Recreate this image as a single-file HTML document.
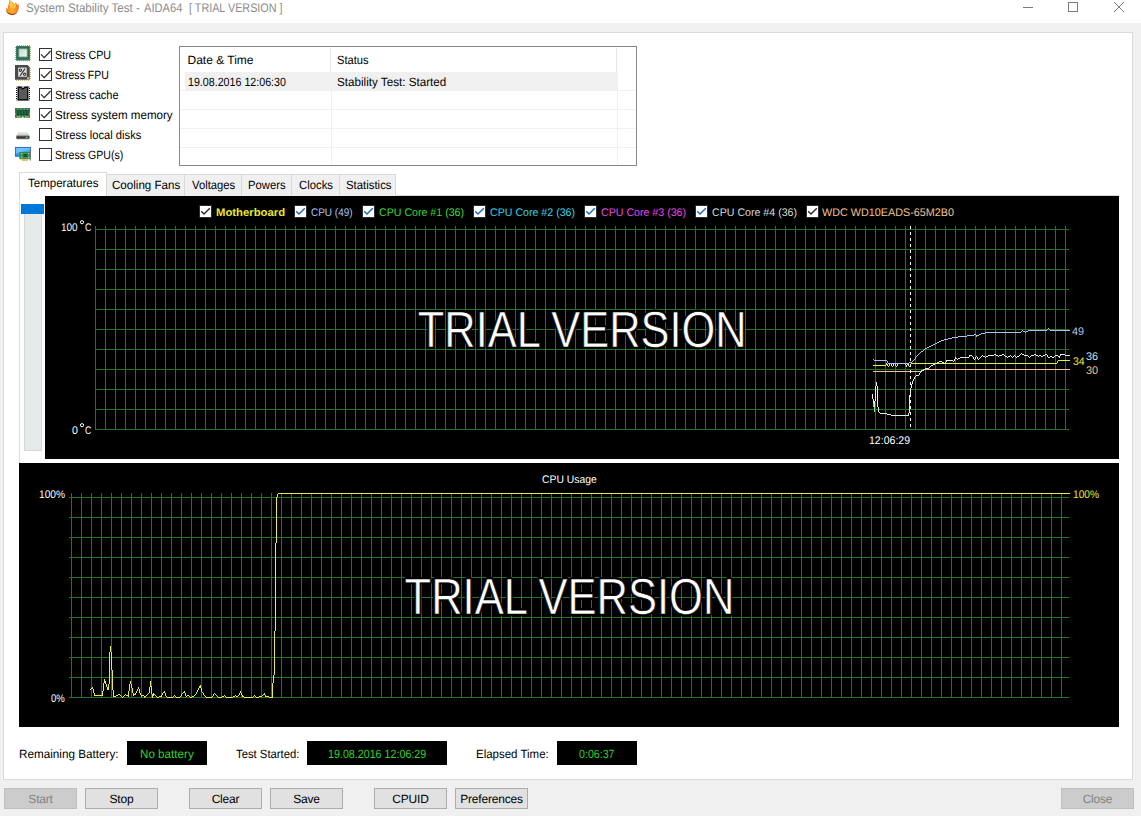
<!DOCTYPE html>
<html><head><meta charset="utf-8"><title>System Stability Test - AIDA64</title>
<style>
html,body{margin:0;padding:0}
body{width:1141px;height:816px;position:relative;overflow:hidden;background:#f0f0f0;font-family:"Liberation Sans",sans-serif;font-size:12px;color:#000;text-rendering:geometricPrecision}
.a{position:absolute}
.t{position:absolute;white-space:pre;transform-origin:0 0}
.cb{position:absolute;left:39px;width:11px;height:11px;border:1px solid #333;background:#fff}
.lcb{position:absolute;top:205px;width:11px;height:11px;background:#fff;border:1px solid #2b2b2b;margin-left:-1px}
.btn{position:absolute;top:788px;width:71px;height:18px;padding-top:1px;border:1px solid #adadad;background:#e1e1e1;text-align:center;line-height:19px;font-size:12px;letter-spacing:-0.2px}
.btn.dis{background:#cccccc;border-color:#bfbfbf;color:#838383}
.sb{position:absolute;top:741px;height:24px;background:#000}
.tab{position:absolute;top:174px;height:21px;border-top:1px solid #d9d9d9;border-right:1px solid #d9d9d9;background:#f0f0f0}
svg{position:absolute;left:0;top:0;overflow:visible}
</style></head>
<body>

<!-- title bar -->
<div class="a" style="left:0;top:0;width:1141px;height:23px;background:#fff"></div>
<svg width="1141" height="24" viewBox="0 0 1141 24">
 <defs>
  <radialGradient id="fl" cx="45%" cy="75%" r="70%"><stop offset="0" stop-color="#ffae3a"/><stop offset=".6" stop-color="#f8861c"/><stop offset="1" stop-color="#e5641a"/></radialGradient>
  <linearGradient id="cpug" x1="0" y1="0" x2="1" y2="1"><stop offset="0" stop-color="#c9d6d0"/><stop offset="1" stop-color="#eefaf5"/></linearGradient>
  <linearGradient id="dk" x1="0" y1="0" x2="0" y2="1"><stop offset="0" stop-color="#ededed"/><stop offset="1" stop-color="#c9c9c9"/></linearGradient>
  <linearGradient id="mon" x1="0" y1="0" x2="0" y2="1"><stop offset="0" stop-color="#58b8f7"/><stop offset="1" stop-color="#2b8fe4"/></linearGradient>
  <linearGradient id="fy" x1="0" y1="0" x2="0" y2="1"><stop offset="0" stop-color="#f7e24a"/><stop offset="1" stop-color="#fdb833"/></linearGradient>
 </defs>
 <path d="M9.6 0 C11.2 1.4 13.2 2.6 14.4 4.4 C14.8 3.8 15.2 3.2 15.5 2.6 C16.4 3.4 16.9 4.3 17.2 5.2 C17.6 4.8 17.9 4.3 18.2 3.8 C19.3 6.8 19 10.2 16.8 12.8 C14.8 14.9 11.2 15.4 8.8 14 C6.2 12.6 5.4 10 6.6 7.4 C6.9 8.1 7.3 8.6 7.8 9 C7.6 5.8 9.4 3.4 9.6 0Z" fill="url(#fl)"/>
 <path d="M9.8 .2 C11 2 12.6 3 13.6 5.2 C14.3 4.7 14.8 4 15.3 3.3 C16.2 4.8 16.3 6 15.8 7.2 C15 9.2 12.2 9.4 10.6 8 C9.4 7 9.2 5.4 9.6 4 C9.9 2.8 10 1.4 9.8 .2Z" fill="url(#fy)"/>
 <path d="M6.4 10.6 C6.6 13.6 10.4 15.8 14 14.8 C15.6 14.3 17 13.2 17.8 11.6 C16.4 13.4 13.6 14.4 11.2 13.8 C9 13.4 7.2 12.4 6.4 10.6Z" fill="#9a3208"/>
 <g stroke="#7b7b7b" stroke-width="1" fill="none" shape-rendering="crispEdges">
  <path d="M1023 7.5H1033"/>
  <rect x="1068.5" y="2.5" width="9" height="9"/>
 </g>
 <path d="M1114 2L1124 12M1124 2L1114 12" stroke="#7b7b7b" stroke-width="1" fill="none"/>
</svg>

<!-- main panel -->
<div class="a" style="left:3px;top:32px;width:1128px;height:746px;border:1px solid #dadada;background:#fff"></div>

<!-- stress icons -->
<svg width="40" height="170" viewBox="0 0 40 170">
 <!-- CPU -->
 <path d="M17 45h1v1h-1zM19 45h1v1h-1zM21 45h1v1h-1zM23 45h1v1h-1zM25 45h1v1h-1zM27 45h1v1h-1zM29 45h1v1h-1zM17 60.3h1v1h-1zM19 60.3h1v1h-1zM21 60.3h1v1h-1zM23 60.3h1v1h-1zM25 60.3h1v1h-1zM27 60.3h1v1h-1zM29 60.3h1v1h-1zM15 47h1v1h-1zM15 49h1v1h-1zM15 51h1v1h-1zM15 53h1v1h-1zM15 55h1v1h-1zM15 57h1v1h-1zM15 59h1v1h-1zM30 47h1v1h-1zM30 49h1v1h-1zM30 51h1v1h-1zM30 53h1v1h-1zM30 55h1v1h-1zM30 57h1v1h-1zM30 59h1v1h-1z" fill="#b9ad62"/>
 <rect x="16" y="46" width="14" height="14.3" fill="#2e6a4f"/>
 <rect x="16.5" y="46.5" width="13" height="13.3" fill="none" stroke="#3d7f62" stroke-width="1"/>
 <rect x="19" y="49" width="8" height="7.8" fill="url(#cpug)" stroke="#9fc7b8" stroke-width=".8"/>
 <!-- FPU -->
 <path d="M29.7 68h1v1h-1zM29.7 70h1v1h-1zM29.7 72h1v1h-1zM29.7 74h1v1h-1zM29.7 76h1v1h-1zM29.7 78h1v1h-1zM16 79.8h1v1h-1zM18 79.8h1v1h-1zM20 79.8h1v1h-1zM22 79.8h1v1h-1zM24 79.8h1v1h-1zM26 79.8h1v1h-1zM28 79.8h1v1h-1z" fill="#c9a94e"/>
 <path d="M15 65H27.6L29.7 67.1V79.8H15Z" fill="#4a4a4a"/>
 <rect x="18.2" y="67.6" width="8.5" height="9.2" fill="#e2e2e2"/>
 <g fill="none" stroke="#3a3a3a"><circle cx="20.4" cy="70.2" r="1.15" stroke-width="1.1"/><circle cx="24.6" cy="74.3" r="1.15" stroke-width="1.1"/><path d="M25 68.6L20 76" stroke-width="1.2"/></g>
 <rect x="27" y="77.2" width="2.2" height="2.2" fill="#d6b35c"/>
 <!-- cache -->
 <rect x="16.5" y="87" width="13" height="13" fill="none" stroke="#111" stroke-width="1" stroke-dasharray="1 1"/>
 <path d="M17.5 86.5H21.5C21.8 88.4 24.2 88.4 24.5 86.5H28.5V100.5H17.5Z" fill="#111"/>
 <path d="M19 88H21C22 90 24 90 25 88H27V99H19Z" fill="#5a5a5a"/>
 <!-- memory -->
 <path d="M15 108H30V113.4H29.4V114.4H30V117.8H23.4V116.6H22.2V117.8H15V114.4H15.6V113.4H15Z" fill="#2f7d4f"/>
 <g fill="#163f28"><rect x="16.8" y="109.6" width="2.4" height="5.6"/><rect x="19.9" y="109.6" width="2.4" height="5.6"/><rect x="23" y="109.6" width="2.4" height="5.6"/><rect x="26.1" y="109.6" width="2.4" height="5.6"/></g>
 <g fill="#2a6a44"><rect x="17.5" y="110.4" width="1" height="4"/><rect x="20.6" y="110.4" width="1" height="4"/><rect x="23.7" y="110.4" width="1" height="4"/><rect x="26.8" y="110.4" width="1" height="4"/></g>
 <g fill="#c9b652"><rect x="16.8" y="116.2" width="4" height="1"/><rect x="25" y="116.2" width="3.6" height="1"/></g>
 <g fill="#a8d8b8"><rect x="17.4" y="108.8" width="1.2" height=".9"/><rect x="20.5" y="108.8" width="1.2" height=".9"/><rect x="23.6" y="108.8" width="1.2" height=".9"/><rect x="26.7" y="108.8" width="1.2" height=".9"/></g>
 <!-- disk -->
 <path d="M18.2 132H27.6L29.6 135.6H16.2Z" fill="url(#dk)"/>
 <rect x="16.2" y="135.4" width="13.4" height="4.3" rx="1" fill="#d4d4d4"/>
 <rect x="16.4" y="135.8" width="13" height="3" rx=".6" fill="#353535"/>
 <rect x="16.4" y="135.6" width="13" height=".7" fill="#8d8d8d"/>
 <rect x="25.8" y="136.9" width="1.8" height="1.2" fill="#5de561"/>
 <!-- GPU -->
 <rect x="15.4" y="147.4" width="15" height="8.8" fill="url(#mon)" stroke="#1f62ad" stroke-width=".9"/>
 <path d="M15.9 147.9H29.9V149.6L15.9 153.6Z" fill="#8fd0fb" opacity=".55"/>
 <path d="M19 158H21.4" stroke="#4a4a4a" stroke-width=".9"/>
 <rect x="20" y="152.3" width="10" height="6.6" fill="#3b9659"/>
 <rect x="20" y="152.3" width="10" height="6.6" fill="none" stroke="#2c7a46" stroke-width=".6"/>
 <rect x="23.4" y="154" width="4.2" height="3" fill="#1c5430"/>
 <g fill="#bfe8c9"><rect x="21.2" y="153.2" width="1" height="1"/><rect x="28" y="153.2" width="1" height="1"/><rect x="21.2" y="156.8" width="1" height="1"/><rect x="28" y="156.8" width="1" height="1"/></g>
 <rect x="22" y="158.9" width="5.8" height="2" fill="#e2b43e"/>
 <path d="M23.4 159V161M25 159V161M26.5 159V161" stroke="#f3d477" stroke-width=".5"/>
 <path d="M30.4 150.2V160.6" stroke="#7a7a7a" stroke-width=".9"/>
</svg>

<!-- stress checkboxes -->
<div class="cb" style="top:48px"></div><div class="cb" style="top:68px"></div><div class="cb" style="top:88px"></div>
<div class="cb" style="top:108px"></div><div class="cb" style="top:128px"></div><div class="cb" style="top:148px"></div>
<svg width="60" height="130" viewBox="0 0 60 130">
 <g stroke="#2b2b2b" stroke-width="1.25" fill="none">
  <path d="M41 54.4L44.2 57.6L50.6 51"/>
  <path d="M41 74.4L44.2 77.6L50.6 71"/>
  <path d="M41 94.4L44.2 97.6L50.6 91"/>
  <path d="M41 114.4L44.2 117.6L50.6 111"/>
 </g>
</svg>

<!-- log table -->
<div class="a" style="left:179px;top:46px;width:456px;height:118px;border:1px solid #828790;background:#fff"></div>
<div class="a" style="left:185px;top:72px;width:432px;height:18px;background:#f0f0f0"></div>
<svg width="640" height="170" viewBox="0 0 640 170" shape-rendering="crispEdges">
 <g stroke="#f0f0f0" stroke-width="1" fill="none">
  <path d="M181 90.5H635M181 109.5H635M181 128.5H635M181 147.5H635"/>
  <path d="M331.5 72V164M617.5 72V164"/>
 </g>
 <g stroke="#e5e5e5" stroke-width="1" fill="none"><path d="M330.5 48V72M616.5 48V72"/></g>
</svg>

<!-- tabs -->
<div class="a" style="left:19px;top:195px;width:1100px;height:1px;background:#d9d9d9"></div>
<div class="tab" style="left:106px;width:78px"></div>
<div class="tab" style="left:185px;width:56px"></div>
<div class="tab" style="left:242px;width:49px"></div>
<div class="tab" style="left:292px;width:47px"></div>
<div class="tab" style="left:340px;width:55px"></div>
<div class="a" style="left:19px;top:172px;width:86px;height:24px;border:1px solid #d9d9d9;border-bottom:none;background:#fff"></div>

<div class="a" style="left:19px;top:196px;width:1px;height:267px;background:#e0e0e0"></div>
<!-- left slider -->
<div class="a" style="left:24px;top:204px;width:16px;height:245px;border:1px solid #d6d6d6;background:#e7eaea"></div>
<div class="a" style="left:21px;top:204px;width:23px;height:10px;background:#0078d7"></div>

<!-- status boxes -->
<div class="sb" style="left:127px;width:80px"></div>
<div class="sb" style="left:307px;width:140px"></div>
<div class="sb" style="left:557px;width:80px"></div>

<!-- charts -->
<div class="a" style="left:45px;top:196px;width:1074px;height:263px;background:#000"></div>
<div class="a" style="left:19px;top:463px;width:1100px;height:264px;background:#000"></div>
<svg width="1141" height="816" viewBox="0 0 1141 816">
 <path d="M95.5 226V430M105.5 226V430M115.5 226V430M125.5 226V430M135.5 226V430M145.5 226V430M155.5 226V430M165.5 226V430M175.5 226V430M185.5 226V430M195.5 226V430M205.5 226V430M215.5 226V430M225.5 226V430M235.5 226V430M245.5 226V430M255.5 226V430M265.5 226V430M275.5 226V430M285.5 226V430M295.5 226V430M305.5 226V430M315.5 226V430M325.5 226V430M335.5 226V430M345.5 226V430M355.5 226V430M365.5 226V430M375.5 226V430M385.5 226V430M395.5 226V430M405.5 226V430M415.5 226V430M425.5 226V430M435.5 226V430M445.5 226V430M455.5 226V430M465.5 226V430M475.5 226V430M485.5 226V430M495.5 226V430M505.5 226V430M515.5 226V430M525.5 226V430M535.5 226V430M545.5 226V430M555.5 226V430M565.5 226V430M575.5 226V430M585.5 226V430M595.5 226V430M605.5 226V430M615.5 226V430M625.5 226V430M635.5 226V430M645.5 226V430M655.5 226V430M665.5 226V430M675.5 226V430M685.5 226V430M695.5 226V430M705.5 226V430M715.5 226V430M725.5 226V430M735.5 226V430M745.5 226V430M755.5 226V430M765.5 226V430M775.5 226V430M785.5 226V430M795.5 226V430M805.5 226V430M815.5 226V430M825.5 226V430M835.5 226V430M845.5 226V430M855.5 226V430M865.5 226V430M875.5 226V430M885.5 226V430M895.5 226V430M905.5 226V430M915.5 226V430M925.5 226V430M935.5 226V430M945.5 226V430M955.5 226V430M965.5 226V430M975.5 226V430M985.5 226V430M995.5 226V430M1005.5 226V430M1015.5 226V430M1025.5 226V430M1035.5 226V430M1045.5 226V430M1055.5 226V430M1065.5 226V430M95 229.5H1069M95 249.5H1069M95 269.5H1069M95 289.5H1069M95 309.5H1069M95 329.5H1069M95 349.5H1069M95 369.5H1069M95 389.5H1069M95 409.5H1069M95 429.5H1069" stroke="#267226" stroke-width="1" fill="none" shape-rendering="crispEdges"/>
 <path d="M71.5 493V698M81.5 493V698M91.5 493V698M101.5 493V698M111.5 493V698M121.5 493V698M131.5 493V698M141.5 493V698M151.5 493V698M161.5 493V698M171.5 493V698M181.5 493V698M191.5 493V698M201.5 493V698M211.5 493V698M221.5 493V698M231.5 493V698M241.5 493V698M251.5 493V698M261.5 493V698M271.5 493V698M281.5 493V698M291.5 493V698M301.5 493V698M311.5 493V698M321.5 493V698M331.5 493V698M341.5 493V698M351.5 493V698M361.5 493V698M371.5 493V698M381.5 493V698M391.5 493V698M401.5 493V698M411.5 493V698M421.5 493V698M431.5 493V698M441.5 493V698M451.5 493V698M461.5 493V698M471.5 493V698M481.5 493V698M491.5 493V698M501.5 493V698M511.5 493V698M521.5 493V698M531.5 493V698M541.5 493V698M551.5 493V698M561.5 493V698M571.5 493V698M581.5 493V698M591.5 493V698M601.5 493V698M611.5 493V698M621.5 493V698M631.5 493V698M641.5 493V698M651.5 493V698M661.5 493V698M671.5 493V698M681.5 493V698M691.5 493V698M701.5 493V698M711.5 493V698M721.5 493V698M731.5 493V698M741.5 493V698M751.5 493V698M761.5 493V698M771.5 493V698M781.5 493V698M791.5 493V698M801.5 493V698M811.5 493V698M821.5 493V698M831.5 493V698M841.5 493V698M851.5 493V698M861.5 493V698M871.5 493V698M881.5 493V698M891.5 493V698M901.5 493V698M911.5 493V698M921.5 493V698M931.5 493V698M941.5 493V698M951.5 493V698M961.5 493V698M971.5 493V698M981.5 493V698M991.5 493V698M1001.5 493V698M1011.5 493V698M1021.5 493V698M1031.5 493V698M1041.5 493V698M1051.5 493V698M1061.5 493V698M69 497.5H1069M69 517.5H1069M69 537.5H1069M69 557.5H1069M69 577.5H1069M69 597.5H1069M69 617.5H1069M69 637.5H1069M69 657.5H1069M69 677.5H1069M69 697.5H1069" stroke="#267226" stroke-width="1" fill="none" shape-rendering="crispEdges"/>
 <!-- watermark text -->
 <g font-family="Liberation Sans, sans-serif" font-size="51" stroke-linejoin="round">
  <g fill="#000" stroke="#000" stroke-width="3.6">
   <text x="417.8" y="347.4" textLength="328.8" lengthAdjust="spacingAndGlyphs">TRIAL VERSION</text>
   <text x="404.6" y="614" textLength="329.8" lengthAdjust="spacingAndGlyphs">TRIAL VERSION</text>
  </g>
  <g fill="#fff" stroke="#000" stroke-width=".6">
   <text x="417.8" y="347.4" textLength="328.8" lengthAdjust="spacingAndGlyphs">TRIAL VERSION</text>
   <text x="404.6" y="614" textLength="329.8" lengthAdjust="spacingAndGlyphs">TRIAL VERSION</text>
  </g>
 </g>
 <!-- temperature curves -->
 <g fill="none" stroke-width="1" stroke-linejoin="round" shape-rendering="crispEdges">
  <path d="M923 369.5h147M921 370.5h2M873 371.5h48" stroke="#f0c391"/>
  <path d="M1058 360.5h12M1057 361.5h1M1057 362.5h1M886 363.5h1M890 363.5h1M894 363.5h1M898 363.5h8M907 363.5h1M911 363.5h146M886 364.5h2M889 364.5h1M891 364.5h1M893 364.5h1M895 364.5h1M897 364.5h1M905 364.5h1M907 364.5h2M910 364.5h1M873 365.5h13M887 365.5h1M889 365.5h1M891 365.5h1M893 365.5h1M895 365.5h1M897 365.5h1M906 365.5h1M908 365.5h1M910 365.5h1M888 366.5h1M892 366.5h1M896 366.5h1M906 366.5h1M909 366.5h1" stroke="#ecec48"/>
  <path d="M1021 353.5h1M994 354.5h2M1002 354.5h2M1020 354.5h1M1022 354.5h2M1034 354.5h2M1045 354.5h2M1060 354.5h5M969 355.5h3M982 355.5h1M988 355.5h6M996 355.5h2M999 355.5h3M1004 355.5h1M1010 355.5h1M1014 355.5h1M1019 355.5h1M1024 355.5h4M1031 355.5h3M1036 355.5h2M1039 355.5h2M1043 355.5h2M1047 355.5h1M1055 355.5h3M1060 355.5h1M1065 355.5h5M969 356.5h1M972 356.5h1M976 356.5h1M981 356.5h1M983 356.5h2M986 356.5h2M998 356.5h1M1005 356.5h2M1008 356.5h2M1011 356.5h1M1013 356.5h1M1015 356.5h1M1017 356.5h2M1028 356.5h1M1030 356.5h1M1038 356.5h1M1041 356.5h2M1047 356.5h1M1050 356.5h2M1054 356.5h1M1058 356.5h2M955 357.5h1M960 357.5h9M973 357.5h1M975 357.5h1M977 357.5h1M980 357.5h1M985 357.5h1M1007 357.5h1M1012 357.5h1M1016 357.5h1M1029 357.5h1M1048 357.5h2M1052 357.5h2M1059 357.5h1M955 358.5h2M958 358.5h2M973 358.5h1M975 358.5h1M977 358.5h1M979 358.5h1M954 359.5h1M957 359.5h1M974 359.5h1M978 359.5h1M946 360.5h7M954 360.5h1M939 361.5h3M946 361.5h1M953 361.5h1M937 362.5h2M942 362.5h2M945 362.5h1M935 363.5h2M944 363.5h2M933 364.5h2M931 365.5h2M930 366.5h1M929 367.5h1M925 368.5h4M924 369.5h1M922 370.5h2M921 371.5h1M920 372.5h1M919 373.5h1M919 374.5h1M916 375.5h3M915 376.5h1M914 377.5h1M914 378.5h1M913 379.5h1M913 380.5h1M912 381.5h1M876 382.5h1M912 382.5h1M876 383.5h1M912 383.5h1M876 384.5h1M911 384.5h1M876 385.5h1M911 385.5h1M875 386.5h1M877 386.5h1M911 386.5h1M875 387.5h1M877 387.5h1M911 387.5h1M875 388.5h1M877 388.5h1M910 388.5h1M875 389.5h1M877 389.5h1M910 389.5h1M875 390.5h1M877 390.5h1M910 390.5h1M875 391.5h1M877 391.5h1M910 391.5h1M875 392.5h1M877 392.5h1M910 392.5h1M875 393.5h1M877 393.5h1M910 393.5h1M872 394.5h1M875 394.5h1M877 394.5h1M910 394.5h1M872 395.5h1M875 395.5h1M877 395.5h1M909 395.5h1M872 396.5h1M875 396.5h1M877 396.5h1M909 396.5h1M872 397.5h1M875 397.5h1M877 397.5h1M909 397.5h1M872 398.5h1M875 398.5h1M877 398.5h1M909 398.5h1M873 399.5h1M875 399.5h1M877 399.5h1M909 399.5h1M873 400.5h1M875 400.5h1M877 400.5h1M909 400.5h1M873 401.5h2M877 401.5h1M909 401.5h1M873 402.5h2M877 402.5h1M909 402.5h1M873 403.5h2M877 403.5h1M909 403.5h1M873 404.5h2M877 404.5h1M909 404.5h1M873 405.5h2M877 405.5h1M909 405.5h1M873 406.5h2M877 406.5h1M909 406.5h1M874 407.5h1M878 407.5h1M909 407.5h1M874 408.5h1M878 408.5h1M909 408.5h1M874 409.5h1M878 409.5h1M909 409.5h1M874 410.5h1M878 410.5h1M909 410.5h1M874 411.5h1M878 411.5h1M909 411.5h1M879 412.5h1M909 412.5h1M880 413.5h7M908 413.5h1M887 414.5h4M908 414.5h1M891 415.5h18" stroke="#dfeee2"/>
  <path d="M873 403.5h1M873 404.5h1M873 405.5h1M873 406.5h1M874 407.5h1M874 408.5h1M874 409.5h1M874 410.5h1M874 411.5h1" stroke="#7fe07f"/>
  <path d="M1048 328.5h1M1047 329.5h1M1049 329.5h1M1022 330.5h1M1028 330.5h19M1050 330.5h20M1021 331.5h1M1023 331.5h2M1026 331.5h2M985 332.5h36M1025 332.5h1M981 333.5h4M974 334.5h2M979 334.5h2M967 335.5h7M976 335.5h3M958 336.5h9M976 336.5h1M952 337.5h6M948 338.5h4M944 339.5h4M941 340.5h3M939 341.5h2M937 342.5h2M935 343.5h2M933 344.5h2M931 345.5h2M929 346.5h2M927 347.5h2M925 348.5h2M924 349.5h1M923 350.5h1M921 351.5h2M920 352.5h1M919 353.5h1M918 354.5h1M917 355.5h1M916 356.5h1M915 357.5h1M915 358.5h1M873 359.5h1M914 359.5h1M874 360.5h13M913 360.5h1M887 361.5h1M912 361.5h1M887 362.5h1M909 362.5h3M888 363.5h21" stroke="#a9c4ee"/>
  <path d="M910.5 226V427" stroke="#fff" stroke-width="1" stroke-dasharray="3 3"/>
 </g>
 <!-- degree signs -->
 <g fill="none" stroke="#fff" stroke-width="1">
  <circle cx="82" cy="222.2" r="1.6"/>
  <circle cx="82" cy="425.2" r="1.6"/>
 </g>
 <!-- cpu usage curve -->
 <g fill="none" stroke-width="1" shape-rendering="crispEdges"><path d="M278 493.5h792M277 494.5h1M277 495.5h1M277 496.5h1M276 497.5h1M276 498.5h1M276 499.5h1M276 500.5h1M276 501.5h1M276 502.5h1M276 503.5h1M276 504.5h1M276 505.5h1M276 506.5h1M276 507.5h1M276 508.5h1M276 509.5h1M276 510.5h1M276 511.5h1M276 512.5h1M276 513.5h1M276 514.5h1M276 515.5h1M276 516.5h1M276 517.5h1M276 518.5h1M276 519.5h1M276 520.5h1M276 521.5h1M276 522.5h1M276 523.5h1M276 524.5h1M276 525.5h1M276 526.5h1M276 527.5h1M276 528.5h1M276 529.5h1M276 530.5h1M276 531.5h1M276 532.5h1M276 533.5h1M276 534.5h1M276 535.5h1M276 536.5h1M276 537.5h1M276 538.5h1M276 539.5h1M276 540.5h1M276 541.5h1M276 542.5h1M275 543.5h1M275 544.5h1M275 545.5h1M275 546.5h1M275 547.5h1M275 548.5h1M275 549.5h1M275 550.5h1M275 551.5h1M275 552.5h1M275 553.5h1M275 554.5h1M275 555.5h1M275 556.5h1M275 557.5h1M275 558.5h1M275 559.5h1M275 560.5h1M275 561.5h1M275 562.5h1M275 563.5h1M275 564.5h1M275 565.5h1M275 566.5h1M275 567.5h1M275 568.5h1M275 569.5h1M275 570.5h1M275 571.5h1M275 572.5h1M275 573.5h1M275 574.5h1M275 575.5h1M275 576.5h1M275 577.5h1M275 578.5h1M275 579.5h1M275 580.5h1M275 581.5h1M275 582.5h1M275 583.5h1M275 584.5h1M275 585.5h1M275 586.5h1M275 587.5h1M275 588.5h1M275 589.5h1M275 590.5h1M275 591.5h1M275 592.5h1M275 593.5h1M275 594.5h1M275 595.5h1M275 596.5h1M275 597.5h1M275 598.5h1M275 599.5h1M275 600.5h1M275 601.5h1M275 602.5h1M275 603.5h1M275 604.5h1M275 605.5h1M275 606.5h1M275 607.5h1M275 608.5h1M275 609.5h1M275 610.5h1M275 611.5h1M275 612.5h1M275 613.5h1M275 614.5h1M275 615.5h1M275 616.5h1M275 617.5h1M275 618.5h1M275 619.5h1M275 620.5h1M275 621.5h1M275 622.5h1M275 623.5h1M275 624.5h1M275 625.5h1M275 626.5h1M275 627.5h1M275 628.5h1M275 629.5h1M275 630.5h1M274 631.5h1M274 632.5h1M274 633.5h1M274 634.5h1M274 635.5h1M274 636.5h1M274 637.5h1M274 638.5h1M274 639.5h1M274 640.5h1M274 641.5h1M274 642.5h1M274 643.5h1M274 644.5h1M274 645.5h1M110 646.5h1M274 646.5h1M110 647.5h1M274 647.5h1M110 648.5h1M274 648.5h1M110 649.5h1M274 649.5h1M110 650.5h1M274 650.5h1M110 651.5h1M274 651.5h1M109 652.5h1M111 652.5h1M274 652.5h1M109 653.5h1M111 653.5h1M274 653.5h1M109 654.5h1M111 654.5h1M274 654.5h1M109 655.5h1M111 655.5h1M274 655.5h1M109 656.5h1M111 656.5h1M274 656.5h1M109 657.5h1M111 657.5h1M274 657.5h1M109 658.5h1M111 658.5h1M274 658.5h1M109 659.5h1M111 659.5h1M274 659.5h1M109 660.5h1M111 660.5h1M274 660.5h1M109 661.5h1M111 661.5h1M274 661.5h1M109 662.5h1M111 662.5h1M274 662.5h1M109 663.5h1M111 663.5h1M274 663.5h1M109 664.5h1M111 664.5h1M274 664.5h1M109 665.5h1M111 665.5h1M274 665.5h1M109 666.5h1M111 666.5h1M274 666.5h1M109 667.5h1M111 667.5h1M274 667.5h1M109 668.5h1M111 668.5h1M274 668.5h1M109 669.5h1M111 669.5h1M274 669.5h1M109 670.5h1M112 670.5h1M274 670.5h1M109 671.5h1M112 671.5h1M274 671.5h1M109 672.5h1M112 672.5h1M274 672.5h1M109 673.5h1M112 673.5h1M274 673.5h1M109 674.5h1M112 674.5h1M274 674.5h1M109 675.5h1M112 675.5h1M273 675.5h1M109 676.5h1M112 676.5h1M273 676.5h1M109 677.5h1M112 677.5h1M273 677.5h1M109 678.5h1M112 678.5h1M273 678.5h1M104 679.5h1M109 679.5h1M112 679.5h1M273 679.5h1M104 680.5h1M109 680.5h1M112 680.5h1M273 680.5h1M104 681.5h2M109 681.5h1M112 681.5h1M130 681.5h1M150 681.5h1M273 681.5h1M104 682.5h2M109 682.5h1M112 682.5h1M130 682.5h1M150 682.5h1M273 682.5h1M103 683.5h1M105 683.5h1M109 683.5h1M112 683.5h1M130 683.5h1M150 683.5h1M272 683.5h1M103 684.5h1M106 684.5h1M108 684.5h1M112 684.5h1M129 684.5h1M131 684.5h1M150 684.5h1M272 684.5h1M103 685.5h1M106 685.5h1M108 685.5h1M112 685.5h1M129 685.5h1M131 685.5h1M150 685.5h1M200 685.5h1M272 685.5h1M103 686.5h1M106 686.5h1M108 686.5h1M112 686.5h1M129 686.5h1M131 686.5h1M150 686.5h2M199 686.5h2M272 686.5h1M92 687.5h1M103 687.5h1M107 687.5h2M112 687.5h1M129 687.5h1M131 687.5h1M138 687.5h1M149 687.5h1M151 687.5h1M199 687.5h2M272 687.5h1M91 688.5h2M103 688.5h1M107 688.5h2M112 688.5h1M129 688.5h1M132 688.5h1M138 688.5h1M149 688.5h1M151 688.5h1M198 688.5h1M201 688.5h1M272 688.5h1M90 689.5h1M93 689.5h1M103 689.5h1M107 689.5h2M112 689.5h1M129 689.5h1M132 689.5h1M137 689.5h1M139 689.5h1M149 689.5h1M151 689.5h1M198 689.5h1M201 689.5h1M272 689.5h1M93 690.5h1M103 690.5h1M113 690.5h1M129 690.5h1M132 690.5h1M137 690.5h1M139 690.5h1M149 690.5h1M151 690.5h1M197 690.5h1M201 690.5h1M272 690.5h1M93 691.5h1M102 691.5h1M113 691.5h1M128 691.5h1M132 691.5h1M136 691.5h1M139 691.5h1M149 691.5h1M151 691.5h1M164 691.5h1M184 691.5h1M197 691.5h1M201 691.5h1M240 691.5h1M272 691.5h1M93 692.5h1M102 692.5h1M113 692.5h1M128 692.5h1M132 692.5h1M136 692.5h1M139 692.5h1M149 692.5h1M151 692.5h1M163 692.5h2M183 692.5h2M196 692.5h1M202 692.5h1M240 692.5h1M272 692.5h1M94 693.5h1M102 693.5h1M113 693.5h1M128 693.5h1M133 693.5h1M135 693.5h1M140 693.5h1M148 693.5h1M151 693.5h1M153 693.5h1M162 693.5h1M165 693.5h1M182 693.5h1M185 693.5h1M196 693.5h1M203 693.5h1M214 693.5h1M239 693.5h1M241 693.5h1M264 693.5h1M272 693.5h1M94 694.5h1M102 694.5h1M113 694.5h1M118 694.5h2M125 694.5h1M128 694.5h1M133 694.5h3M140 694.5h1M147 694.5h1M152 694.5h3M162 694.5h1M165 694.5h1M181 694.5h1M185 694.5h1M195 694.5h1M203 694.5h1M213 694.5h1M215 694.5h1M239 694.5h1M241 694.5h1M263 694.5h2M272 694.5h1M94 695.5h9M113 695.5h1M116 695.5h2M120 695.5h1M124 695.5h1M126 695.5h3M133 695.5h1M141 695.5h3M146 695.5h1M152 695.5h2M155 695.5h1M161 695.5h1M165 695.5h1M174 695.5h1M181 695.5h1M185 695.5h1M187 695.5h2M194 695.5h1M204 695.5h1M213 695.5h1M216 695.5h1M224 695.5h1M235 695.5h1M238 695.5h1M242 695.5h1M254 695.5h1M262 695.5h1M265 695.5h1M272 695.5h1M113 696.5h3M121 696.5h1M123 696.5h1M128 696.5h1M141 696.5h1M144 696.5h2M152 696.5h1M156 696.5h1M159 696.5h3M166 696.5h1M173 696.5h1M175 696.5h1M180 696.5h1M186 696.5h1M189 696.5h1M192 696.5h2M205 696.5h1M212 696.5h1M217 696.5h1M222 696.5h2M225 696.5h1M233 696.5h2M236 696.5h2M242 696.5h2M253 696.5h1M255 696.5h1M259 696.5h3M265 696.5h4M272 696.5h1M122 697.5h1M144 697.5h1M152 697.5h1M157 697.5h2M167 697.5h6M176 697.5h4M190 697.5h2M206 697.5h6M218 697.5h4M226 697.5h7M244 697.5h9M256 697.5h3M269 697.5h4" stroke="#e9e94a"/></g>
</svg>

<!-- legend checkboxes -->
<div class="lcb" style="left:200px"></div><div class="lcb" style="left:295px"></div><div class="lcb" style="left:363px"></div>
<div class="lcb" style="left:474px"></div><div class="lcb" style="left:585px"></div><div class="lcb" style="left:696px"></div><div class="lcb" style="left:807px"></div>
<svg width="830" height="220" viewBox="0 0 830 220">
 <g fill="none" stroke-width="1.4">
  <path d="M201.2 211.2L204.0 214L209.8 208.2" stroke="#2a2a2a"/>
  <path d="M296.2 211.2L299.0 214L304.8 208.2" stroke="#1a67c0"/>
  <path d="M364.2 211.2L367.0 214L372.8 208.2" stroke="#1a67c0"/>
  <path d="M475.2 211.2L478.0 214L483.8 208.2" stroke="#1a67c0"/>
  <path d="M586.2 211.2L589.0 214L594.8 208.2" stroke="#1a67c0"/>
  <path d="M697.2 211.2L700.0 214L705.8 208.2" stroke="#1a67c0"/>
  <path d="M808.2 211.2L811.0 214L816.8 208.2" stroke="#2a2a2a"/>
 </g>
</svg>

<span class="t" style="left:25.50px;top:-0.03px;font-size:12.5px;line-height:16px;color:#8c8c8c;transform:scaleX(0.9284)">System Stability Test -</span>
<span class="t" style="left:143.50px;top:-0.03px;font-size:12.5px;line-height:16px;color:#8c8c8c;transform:scaleX(0.8904)">AIDA64</span>
<span class="t" style="left:188.80px;top:-0.03px;font-size:12.5px;line-height:16px;color:#8c8c8c;transform:scaleX(0.8630)">[ TRIAL VERSION ]</span>
<span class="t" style="left:55.30px;top:47.64px;font-size:12.0px;line-height:15px;color:#000;transform:scaleX(0.8950)">Stress CPU</span>
<span class="t" style="left:55.30px;top:67.64px;font-size:12.0px;line-height:15px;color:#000;transform:scaleX(0.8801)">Stress FPU</span>
<span class="t" style="left:55.30px;top:87.64px;font-size:12.0px;line-height:15px;color:#000;transform:scaleX(0.9169)">Stress cache</span>
<span class="t" style="left:55.30px;top:107.64px;font-size:12.0px;line-height:15px;color:#000;transform:scaleX(0.9638)">Stress system memory</span>
<span class="t" style="left:55.30px;top:127.64px;font-size:12.0px;line-height:15px;color:#000;transform:scaleX(0.9310)">Stress local disks</span>
<span class="t" style="left:55.30px;top:147.64px;font-size:12.0px;line-height:15px;color:#000;transform:scaleX(0.8831)">Stress GPU(s)</span>
<span class="t" style="left:187.50px;top:52.64px;font-size:12.0px;line-height:15px;letter-spacing:0.000px;color:#000">Date &amp; Time</span>
<span class="t" style="left:337.20px;top:52.64px;font-size:12.0px;line-height:15px;color:#000;transform:scaleX(0.9289)">Status</span>
<span class="t" style="left:187.50px;top:74.64px;font-size:12.0px;line-height:15px;color:#000;transform:scaleX(0.8893)">19.08.2016 12:06:30</span>
<span class="t" style="left:337.20px;top:74.64px;font-size:12.0px;line-height:15px;color:#000;transform:scaleX(0.9711)">Stability Test: Started</span>
<span class="t" style="left:28.20px;top:175.64px;font-size:12.0px;line-height:15px;color:#000;transform:scaleX(0.9609)">Temperatures</span>
<span class="t" style="left:111.70px;top:177.64px;font-size:12.0px;line-height:15px;color:#000;transform:scaleX(0.9660)">Cooling Fans</span>
<span class="t" style="left:192.30px;top:177.64px;font-size:12.0px;line-height:15px;color:#000;transform:scaleX(0.9384)">Voltages</span>
<span class="t" style="left:248.40px;top:177.64px;font-size:12.0px;line-height:15px;color:#000;transform:scaleX(0.9397)">Powers</span>
<span class="t" style="left:298.60px;top:177.64px;font-size:12.0px;line-height:15px;color:#000;transform:scaleX(0.9443)">Clocks</span>
<span class="t" style="left:346.00px;top:177.64px;font-size:12.0px;line-height:15px;color:#000;transform:scaleX(0.9477)">Statistics</span>
<span class="t" style="left:215.60px;top:206.49px;font-size:11.0px;line-height:14px;color:#e9e92c;font-weight:bold;transform:scaleX(1.0271)">Motherboard</span>
<span class="t" style="left:310.60px;top:206.49px;font-size:11.0px;line-height:14px;color:#a9c4ee;transform:scaleX(0.9075)">CPU (49)</span>
<span class="t" style="left:378.60px;top:206.49px;font-size:11.0px;line-height:14px;color:#36dc36;transform:scaleX(0.9660)">CPU Core #1 (36)</span>
<span class="t" style="left:489.60px;top:206.49px;font-size:11.0px;line-height:14px;color:#36d2ea;transform:scaleX(0.9660)">CPU Core #2 (36)</span>
<span class="t" style="left:600.60px;top:206.49px;font-size:11.0px;line-height:14px;color:#ea48ea;transform:scaleX(0.9660)">CPU Core #3 (36)</span>
<span class="t" style="left:711.60px;top:206.49px;font-size:11.0px;line-height:14px;color:#d4dcdc;transform:scaleX(0.9660)">CPU Core #4 (36)</span>
<span class="t" style="left:822.40px;top:206.49px;font-size:11.0px;line-height:14px;color:#f0c391;transform:scaleX(0.9810)">WDC WD10EADS-65M2B0</span>
<span class="t" style="left:61.30px;top:221.49px;font-size:11.0px;line-height:14px;color:#fff;transform:scaleX(0.9048)">100</span>
<span class="t" style="left:84.60px;top:221.49px;font-size:11.0px;line-height:14px;color:#fff;transform:scaleX(0.8000)">C</span>
<span class="t" style="left:72.00px;top:424.49px;font-size:11.0px;line-height:14px;color:#fff;transform:scaleX(0.9667)">0</span>
<span class="t" style="left:84.60px;top:424.49px;font-size:11.0px;line-height:14px;color:#fff;transform:scaleX(0.8000)">C</span>
<span class="t" style="left:869.00px;top:434.49px;font-size:11.0px;line-height:14px;color:#fff;transform:scaleX(0.9602)">12:06:29</span>
<span class="t" style="left:1072.00px;top:325.49px;font-size:11.0px;line-height:14px;color:#a9c4ee;transform:scaleX(0.9903)">49</span>
<span class="t" style="left:1086.00px;top:350.49px;font-size:11.0px;line-height:14px;color:#c6e2f2;transform:scaleX(0.9903)">36</span>
<span class="t" style="left:1072.50px;top:355.49px;font-size:11.0px;line-height:14px;color:#e9e92c;transform:scaleX(0.9490)">34</span>
<span class="t" style="left:1086.00px;top:364.49px;font-size:11.0px;line-height:14px;color:#f0c391;transform:scaleX(0.9903)">30</span>
<span class="t" style="left:541.70px;top:473.49px;font-size:11.0px;line-height:14px;color:#fff;transform:scaleX(0.9420)">CPU Usage</span>
<span class="t" style="left:38.60px;top:488.49px;font-size:11.0px;line-height:14px;color:#fff;transform:scaleX(0.9276)">100%</span>
<span class="t" style="left:50.70px;top:692.49px;font-size:11.0px;line-height:14px;color:#fff;transform:scaleX(0.8686)">0%</span>
<span class="t" style="left:1072.70px;top:488.49px;font-size:11.0px;line-height:14px;color:#e9e92c;transform:scaleX(0.9276)">100%</span>
<span class="t" style="left:19.30px;top:746.64px;font-size:12.0px;line-height:15px;color:#000;transform:scaleX(0.9753)">Remaining Battery:</span>
<span class="t" style="left:140.30px;top:746.64px;font-size:12.0px;line-height:15px;color:#2fd32f;transform:scaleX(0.9700)">No battery</span>
<span class="t" style="left:235.80px;top:746.64px;font-size:12.0px;line-height:15px;color:#000;transform:scaleX(0.9414)">Test Started:</span>
<span class="t" style="left:327.50px;top:746.64px;font-size:12.0px;line-height:15px;color:#2fd32f;transform:scaleX(0.8920)">19.08.2016 12:06:29</span>
<span class="t" style="left:476.40px;top:746.64px;font-size:12.0px;line-height:15px;color:#000;transform:scaleX(0.9563)">Elapsed Time:</span>
<span class="t" style="left:578.60px;top:746.64px;font-size:12.0px;line-height:15px;color:#2fd32f;transform:scaleX(0.8869)">0:06:37</span>
<div class="btn dis" style="left:4px">Start</div>
<div class="btn" style="left:85px">Stop</div>
<div class="btn" style="left:189px">Clear</div>
<div class="btn" style="left:270px">Save</div>
<div class="btn" style="left:374px">CPUID</div>
<div class="btn" style="left:455px">Preferences</div>
<div class="btn dis" style="left:1061px">Close</div>
</body></html>
